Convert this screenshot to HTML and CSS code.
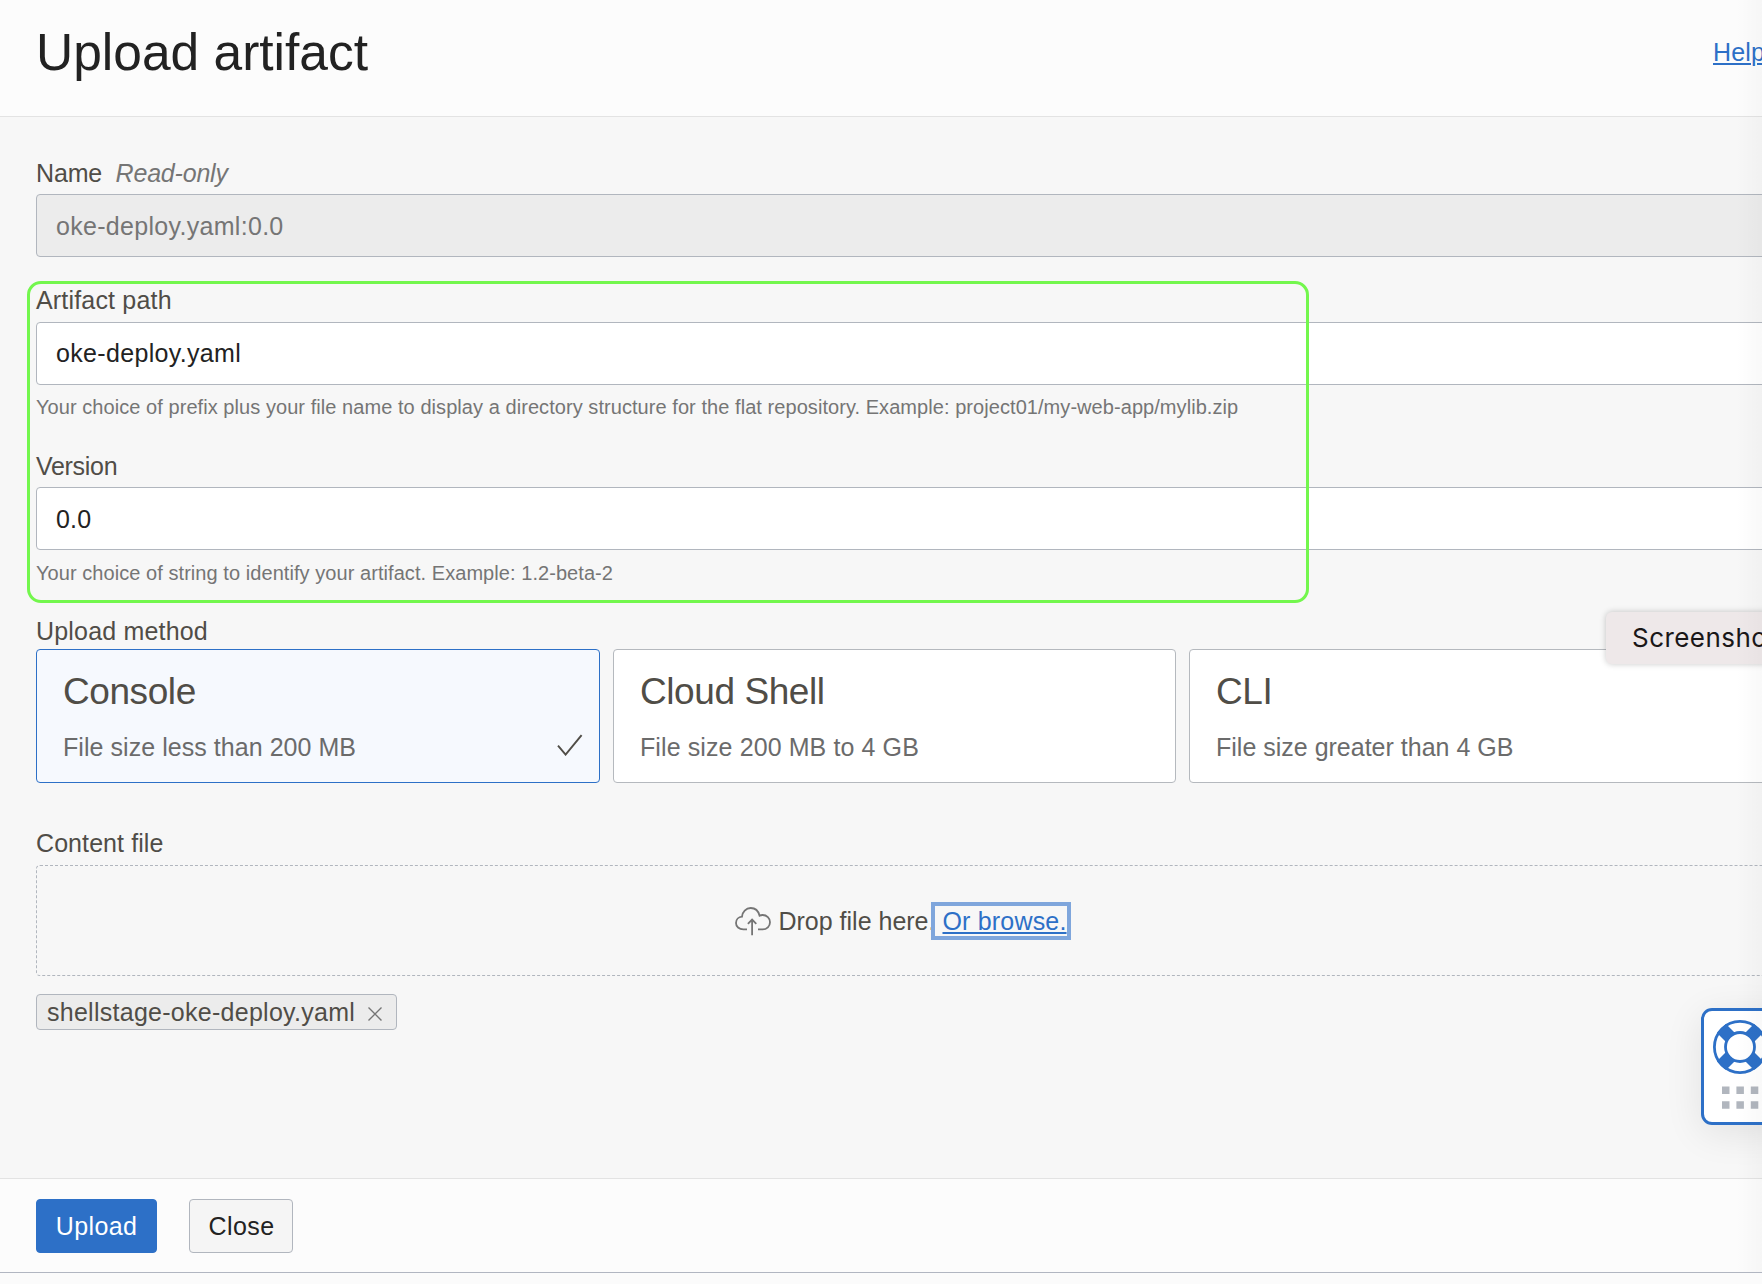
FILE: index.html
```html
<!DOCTYPE html>
<html lang="en">
<head>
<meta charset="utf-8">
<title>Upload artifact</title>
<link rel="stylesheet" href="styles.css">
</head>
<body>
<div class="panel">
  <header class="panel-header">
    <h1 class="title">Upload artifact</h1>
    <a class="help" href="#">Help</a>
  </header>

  <main class="content">
    <div class="field field-name">
      <div class="label"><span class="name-text">Name</span><em class="hint">Read-only</em></div>
      <div class="input input-readonly">oke-deploy.yaml:0.0</div>
    </div>
    <div class="field field-path">
      <div class="label">Artifact path</div>
      <div class="input input-path">oke-deploy.yaml</div>
      <div class="help-text">Your choice of prefix plus your file name to display a directory structure for the flat repository. Example: project01/my-web-app/mylib.zip</div>
    </div>
    <div class="field field-version">
      <div class="label label-version">Version</div>
      <div class="input">0.0</div>
      <div class="help-text">Your choice of string to identify your artifact. Example: 1.2-beta-2</div>
    </div>
    <div class="field field-method">
      <div class="label">Upload method</div>
      <div class="cards">
        <div class="card card-selected">
          <div class="card-title">Console</div>
          <div class="card-text">File size less than 200 MB</div>
          <svg class="check" viewBox="0 0 26 22"><path d="M1 11.6 8.6 20.6 24.6 1.2"/></svg>
        </div>
        <div class="card">
          <div class="card-title">Cloud Shell</div>
          <div class="card-text card-text-mid">File size 200 MB to 4 GB</div>
        </div>
        <div class="card">
          <div class="card-title">CLI</div>
          <div class="card-text card-text-last">File size greater than 4 GB</div>
        </div>
      </div>
    </div>
    <div class="field field-file">
      <div class="label label-file">Content file</div>
      <div class="dropzone">
        <svg class="cloud" viewBox="0 0 36 29"><path d="M12 22.4H8.4C4 22.4 1 19.6 1 15.9c0-3.400 2.600-6 6-6.300C7.300 4.900 11 1 15.700 1c4 0 7.600 2.600 8.900 7.700 1-.5 2-.7 3-.7 4.200 0 7.400 3.300 7.400 7.200 0 4-3.200 7.200-7.400 7.200H23M17.100 28.200V13M12.900 16.800 17.100 12.600l4.200 4.200"/></svg>
        <span class="drop-text">Drop file here.</span><a class="browse" href="#">Or browse.</a>
      </div>
      <div class="chip">
        <span class="chip-text">shellstage-oke-deploy.yaml</span>
        <svg class="remove" viewBox="0 0 14 14"><path d="M.5.5l13 13M13.500.5l-13 13"/></svg>
      </div>
    </div>
  </main>

  <footer class="panel-footer">
    <button class="btn btn-primary">Upload</button>
    <button class="btn btn-close">Close</button>
  </footer>
</div>

<div class="highlight"></div>
<div class="tooltip">Screenshot</div>
<div class="support">
  <svg class="lifebuoy" viewBox="0 0 54 54">
    <defs><clipPath id="ring"><path clip-rule="evenodd" d="M27 0a27 27 0 1 0 0 54 27 27 0 1 0 0-54ZM27 13a14 14 0 1 1 0 28 14 14 0 1 1 0-28Z"/></clipPath></defs>
    <circle cx="27" cy="27" r="25.600" class="rim"/>
    <circle cx="27" cy="27" r="14.500" class="rim rim-inner"/>
    <path class="bands" clip-path="url(#ring)" d="M3.500 12.500 12.500 3.500 50.500 41.500 41.500 50.500ZM41.500 3.500 50.500 12.500 12.500 50.500 3.500 41.500Z"/>
  </svg>
  <svg class="grip" viewBox="0 0 51 23">
    <path d="M0 .5h7.500V8H0zM14.400.5h7.500V8h-7.500zM28.800.5h7.500V8h-7.500zM43.200.5h7.500V8h-7.500zM0 15.300h7.500v7.500H0zM14.400 15.300h7.500v7.500h-7.500zM28.800 15.300h7.500v7.500h-7.500zM43.200 15.300h7.500v7.500h-7.500z"/>
  </svg>
</div>
<div class="edge-shade"></div>
</body>
</html>
```
FILE: styles.css
```css
* { box-sizing: border-box; }

html, body {
  margin: 0;
  width: 100%;
  height: 1284px;
  overflow: hidden;
}

body {
  position: relative;
  background: #fbfbfb;
  color: #504d47;
  font: 25px/28px "Liberation Sans", Arial, sans-serif;
  letter-spacing: 0.180px;
  white-space: nowrap;
}

.panel {
  display: flex;
  flex-direction: column;
  height: 1273px;
  background: #f7f7f7;
  border-bottom: 1px solid #b1b6c1;
}

.panel-header {
  display: flex;
  flex: none;
  height: 117px;
  padding: 23px 0 0 36px;
  background: #fcfcfc;
  border-bottom: 1px solid #e3e3e3;
}

.title {
  flex: 1;
  margin: 0;
  color: #222;
  font-size: 51.500px;
  font-weight: 400;
  line-height: 58px;
  letter-spacing: 0;
}

.help {
  width: 49px;
  margin-top: 15px;
  color: #2d70c7;
  text-decoration-thickness: 2px;
  text-underline-offset: 2px;
}

.content {
  flex: 1;
  width: 1766px;
  padding: 42px 0 0 36px;
}

.field { display: flex; flex-direction: column; }

.label { margin-bottom: 7px; height: 28px; }

.name-text { letter-spacing: -0.150px; }

.hint {
  margin-left: 13.500px;
  color: #757575;
  letter-spacing: -0.200px;
}

.input {
  height: 63px;
  padding: 17px 0 0 19px;
  color: #222;
  background: #fff;
  border: 1px solid #b1b6be;
  border-radius: 4px;
}

.input-readonly {
  color: #757575;
  background: #ececec;
  letter-spacing: 0.300px;
}

.input-path {
  padding-top: 16px;
  letter-spacing: 0.330px;
}

.help-text {
  margin-top: 11px;
  color: #757575;
  font-size: 20px;
  line-height: 22px;
  letter-spacing: 0.060px;
}

.field-path { margin-top: 29px; }
.field-path .label { margin-bottom: 8px; }

.field-version { margin-top: 34px; }
.field-version .help-text { margin-top: 12px; }

.label-version { letter-spacing: -0.300px; }

.field-method { margin-top: 33px; }
.field-method .label { margin-bottom: 4px; }

.cards {
  display: grid;
  grid-template-columns: 564px 563px 1fr;
  gap: 13px;
}

.card {
  position: relative;
  height: 134px;
  padding: 21px 0 0 26px;
  background: #fff;
  border: 1px solid #b5b9be;
  border-radius: 4px;
}

.card-selected {
  background: #f6f9fe;
  border-color: #2d70c7;
}

.card-title {
  font-size: 37px;
  line-height: 42px;
  letter-spacing: -0.420px;
}

.card-text {
  margin-top: 20px;
  color: #6b6b6b;
  letter-spacing: 0.050px;
}

.card-text-mid { letter-spacing: 0.100px; }
.card-text-last { letter-spacing: 0; }

.check {
  position: absolute;
  right: 16px;
  bottom: 26px;
  width: 26px;
  height: 22px;
  fill: none;
  stroke: #504d47;
  stroke-width: 1.900;
}

.field-file { margin-top: 46px; }
.field-file .label { margin-bottom: 8px; }
.label-file { letter-spacing: 0.080px; }

.dropzone {
  display: flex;
  justify-content: center;
  align-items: center;
  height: 111px;
  border: 1px dashed #b1b6be;
  border-radius: 4px;
}

.cloud {
  width: 36px;
  height: 29px;
  margin: 2px 7px 0 0;
  fill: none;
  stroke: #757575;
  stroke-width: 1.800;
}

.drop-text { letter-spacing: 0; }

.browse {
  height: 30px;
  padding-left: 7px;
  line-height: 30px;
  color: #2d70c7;
  outline: 4px solid #7fa6dc;
  text-decoration-thickness: 2px;
  text-underline-offset: 2px;
}

.chip {
  display: flex;
  align-items: center;
  justify-content: space-between;
  width: 361px;
  height: 36px;
  margin-top: 18px;
  padding: 0 14px 0 10px;
  background: #ececec;
  border: 1px solid #b1b6be;
  border-radius: 4px;
  letter-spacing: 0.270px;
}

.chip-text { margin-bottom: 1px; }

.remove {
  width: 14px;
  height: 14px;
  margin-top: 4px;
  fill: none;
  stroke: #757575;
  stroke-width: 1.400;
}

.panel-footer {
  display: flex;
  flex: none;
  gap: 32px;
  height: 94px;
  padding: 20px 36px;
  background: #fcfcfc;
  border-top: 1px solid #e3e3e3;
}

.btn {
  height: 54px;
  padding: 0;
  border: 1px solid #b1b6be;
  border-radius: 4px;
  font: inherit;
  letter-spacing: 0.400px;
}

.btn-primary {
  width: 121px;
  color: #fff;
  background: #2d70c7;
  border-color: #2d70c7;
}

.btn-close {
  width: 104px;
  padding-left: 1px;
  color: #222;
  background: #f5f5f5;
}

/* Annotation frame drawn over the path and version fields */
.highlight {
  position: absolute;
  left: 27px;
  top: 281px;
  width: 1282px;
  height: 322px;
  border: 3px solid #73f74d;
  border-radius: 14px;
}

.tooltip {
  position: absolute;
  left: 1606px;
  top: 612px;
  width: 180px;
  height: 52px;
  padding-left: 26px;
  color: #1a1718;
  background: #eee8e9;
  border-radius: 6px;
  box-shadow: 0 0 6px rgba(0, 0, 0, 0.220);
  font: 26px/52px Inter, sans-serif;
  letter-spacing: 0.450px;
}

.support {
  position: absolute;
  left: 1701px;
  top: 1008px;
  width: 90px;
  height: 117px;
  background: #fff;
  border: 3px solid #2d70c7;
  border-radius: 11px;
  box-shadow: 0 8px 38px rgba(0, 0, 0, 0.090);
}

.lifebuoy {
  display: block;
  width: 54px;
  height: 54px;
  margin: 9px 0 0 9px;
}

.rim { fill: none; stroke: #2d70c7; stroke-width: 2.800; }
.bands { fill: #2d70c7; }

.grip {
  display: block;
  width: 51px;
  height: 23px;
  margin: 12px 0 0 18px;
  fill: #b1b6be;
}

.edge-shade {
  position: absolute;
  top: 0;
  right: 0;
  width: 26px;
  height: 1272px;
  background: linear-gradient(to right, rgba(0, 0, 0, 0), rgba(0, 0, 0, 0.024));
}
```
